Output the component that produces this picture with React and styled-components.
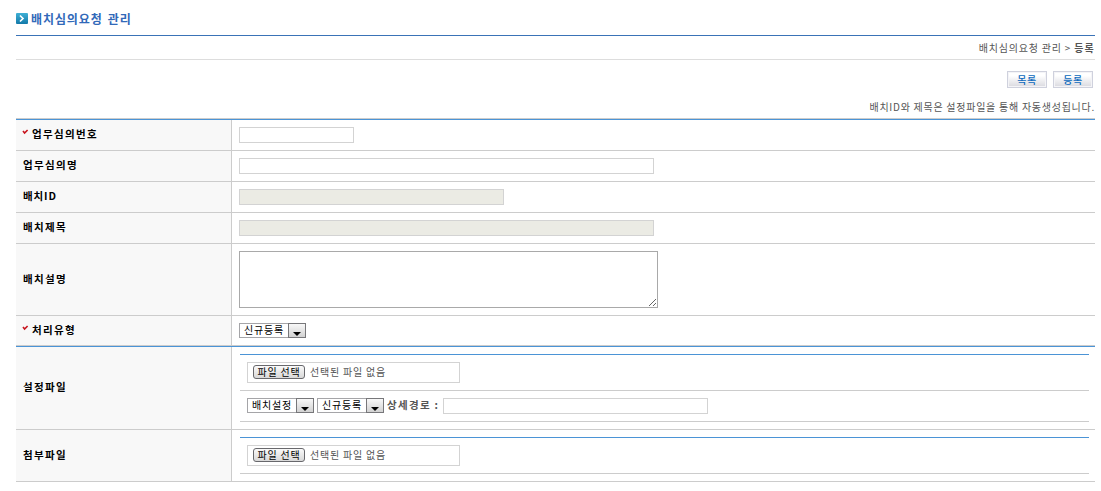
import React from "react";
import styled, { createGlobalStyle } from "styled-components";

const Global = createGlobalStyle`
  * { box-sizing: border-box; }
  body { margin: 0; background: #fff; }
  input, textarea, button { font: inherit; margin: 0; padding: 0; outline: 0; border-radius: 0; display: block; }
`;

const Page = styled.main`
  width: 1079px;
  margin-left: 16px;
  height: 491px;
  font: 10px/14px "Noto Sans CJK KR", sans-serif;
  letter-spacing: 0.8px;
  color: #555;
  white-space: nowrap;
`;

const Header = styled.header`
  display: flex;
  align-items: center;
  height: 36px;
  padding-top: 2px;
  gap: 3px;
  border-bottom: 1px solid #3a73b7;
`;

const Title = styled.h1`
  margin: 0;
  font-size: 12px;
  line-height: 16px;
  font-weight: 700;
  letter-spacing: 0.9px;
  word-spacing: 1.6px;
  color: #3169b9;
`;

const Location = styled.nav`
  display: flex;
  align-items: center;
  justify-content: flex-end;
  height: 24px;
  gap: 3px;
  border-bottom: 1px solid #ddd;
`;

const Current = styled.strong`
  font-weight: 700;
  letter-spacing: 1.2px;
`;

const Actions = styled.div`
  display: flex;
  justify-content: flex-end;
  gap: 6px;
  padding: 11px 2px 0 0;
  height: 40px;
`;

const ActionButton = styled.button`
  width: 40px;
  height: 17px;
  border: 1px solid #cfd1dd;
  box-shadow: inset 0 0 0 1px #f4f4f7;
  background: linear-gradient(#fff 25%, #d9d9df);
  color: #0968bd;
  font-weight: 500;
  line-height: 14px;
  letter-spacing: 0.6px;
`;

const Notice = styled.p`
  display: flex;
  justify-content: flex-end;
  margin: 0;
  height: 18px;
  letter-spacing: 0.74px;
`;

const FormTable = styled.section`
  border-top: 1px solid #ccc;
`;

const Row = styled.div`
  display: grid;
  grid-template-columns: 216px 1fr;
  height: ${(p) => p.$height}px;
  border-top: ${(p) => (p.$accent ? "1px solid #4b94d6" : "0")};
  border-bottom: 1px solid #ccc;
`;

const Label = styled.div`
  display: flex;
  align-items: center;
  gap: 3px;
  padding-left: ${(p) => (p.$required ? 6 : 7)}px;
  padding-bottom: 2px;
  background: #f8f8f8;
  border-right: 1px solid #ccc;
  color: #000;
  font-size: 10.5px;
  font-weight: 700;
  letter-spacing: 1.35px;
`;

const LabelText = styled.span`
  letter-spacing: ${(p) => (p.$latin ? "0.9px" : "inherit")};
`;

const Cell = styled.div`
  padding: 7px;
`;

const TextInput = styled.input`
  width: ${(p) => p.$width}px;
  height: 16px;
  border: 1px solid #d3d3d3;
  background: ${(p) => (p.readOnly ? "#ebebe4" : "#fff")};
`;

const TextArea = styled.textarea`
  width: 419px;
  height: 57px;
  border: 1px solid #a9a9a9;
  resize: both;
`;

const SelectBox = styled.div`
  display: flex;
  justify-content: space-between;
  width: 67px;
  height: 15px;
  padding-left: 4px;
  border: 1px solid #a5a5a8;
  background: #fff;
  color: #000;
  line-height: 12px;
  letter-spacing: 0.8px;
`;

const SelectArrow = styled.span`
  display: flex;
  justify-content: center;
  align-items: flex-end;
  width: 18px;
  height: 15px;
  margin: -1px -1px 0 0;
  padding-bottom: 1px;
  border: 1px solid #77777a;
  background: linear-gradient(#f8f8f8, #d2d2d2);
`;

const FileList = styled.div`
  margin-right: -1px;
  margin-left: 1px;
  border-top: 1px solid #4b94d6;
`;

const FileLine = styled.div`
  display: flex;
  gap: 3px;
  height: ${(p) => p.$height}px;
  padding: 7px 7px 0;
  border-bottom: 1px solid #ccc;
`;

const FileBox = styled.div`
  display: flex;
  width: 213px;
  height: 21px;
  padding: 2px 5px;
  gap: 5px;
  border: 1px solid #d3d3d3;
`;

const FileButton = styled.button`
  width: 52px;
  height: 14px;
  border: 1px solid #68686c;
  border-radius: 3px;
  background: linear-gradient(#fafafa, #d8d8d8);
  color: #000;
  line-height: 12px;
  letter-spacing: 0.8px;
`;

const PathLabel = styled.strong`
  width: 53px;
  font-size: 10.5px;
  letter-spacing: 1.3px;
`;

function TitleIcon() {
  return (
    <svg width="12" height="12" viewBox="0 0 12 12">
      <defs>
        <linearGradient id="tile" x1="0" y1="0" x2="0" y2="1">
          <stop offset="0" stopColor="#3fb0d5" />
          <stop offset="1" stopColor="#1379a9" />
        </linearGradient>
      </defs>
      <rect width="12" height="11" rx="1" fill="url(#tile)" />
      <path d="M4 2.5 7 5.5 4 8.5" fill="none" stroke="#fff" strokeWidth="1.7" />
    </svg>
  );
}

function RequiredMark() {
  return (
    <svg width="7" height="12" viewBox="0 0 7 12">
      <path d="M1 3 2.6 5 5.6 2" fill="none" stroke="#c8141e" strokeWidth="1.6" />
    </svg>
  );
}

function Select({ children }) {
  return (
    <SelectBox>
      {children}
      <SelectArrow>
        <svg width="8" height="4" viewBox="0 0 8 4"><path d="M0 0h8L4 4z" fill="#000" /></svg>
      </SelectArrow>
    </SelectBox>
  );
}

function FilePicker() {
  return (
    <FileBox>
      <FileButton>파일 선택</FileButton>
      <span>선택된 파일 없음</span>
    </FileBox>
  );
}

function Field({ label, required, latin, height, accent, children }) {
  return (
    <Row $height={height} $accent={accent}>
      <Label $required={required}>
        {required && <RequiredMark />}
        <LabelText $latin={latin}>{label}</LabelText>
      </Label>
      <Cell>{children}</Cell>
    </Row>
  );
}

export default function App() {
  return (
    <Page>
      <Global />
      <Header>
        <TitleIcon />
        <Title>배치심의요청 관리</Title>
      </Header>
      <Location>
        <span>배치심의요청 관리 &gt;</span>
        <Current>등록</Current>
      </Location>
      <Actions>
        <ActionButton>목록</ActionButton>
        <ActionButton>등록</ActionButton>
      </Actions>
      <Notice>배치ID와 제목은 설정파일을 통해 자동생성됩니다.</Notice>
      <FormTable>
        <Field label="업무심의번호" required accent height={32}><TextInput $width={115} /></Field>
        <Field label="업무심의명" height={31}><TextInput $width={415} /></Field>
        <Field label="배치ID" latin height={31}><TextInput $width={265} readOnly /></Field>
        <Field label="배치제목" height={31}><TextInput $width={415} readOnly /></Field>
        <Field label="배치설명" height={72}><TextArea /></Field>
        <Field label="처리유형" required height={30}><Select>신규등록</Select></Field>
        <Field label="설정파일" accent height={84}>
          <FileList>
            <FileLine $height={36}><FilePicker /></FileLine>
            <FileLine $height={31}>
              <Select>배치설정</Select>
              <Select>신규등록</Select>
              <PathLabel>상세경로 :</PathLabel>
              <TextInput $width={265} />
            </FileLine>
          </FileList>
        </Field>
        <Field label="첨부파일" height={52}>
          <FileList>
            <FileLine $height={36}><FilePicker /></FileLine>
          </FileList>
        </Field>
      </FormTable>
    </Page>
  );
}
